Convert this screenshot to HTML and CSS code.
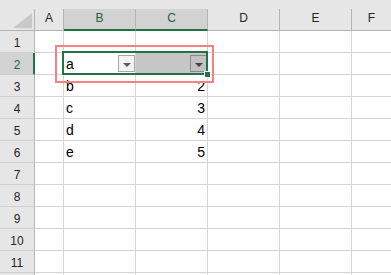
FILE: index.html
```html
<!DOCTYPE html>
<html>
<head>
<meta charset="utf-8">
<link rel="stylesheet" href="styles.css">
</head>
<body>
<div class="screen">
  <div class="topstrip"></div>
  <div class="sheet">
    <div class="hd corner"><svg width="19" height="15" viewBox="0 0 19 15"><polygon points="19,0 19,15 0,15" fill="#c9c9c9"/></svg></div>
    <div class="hd col">A</div>
    <div class="hd col sel">B</div>
    <div class="hd col sel">C</div>
    <div class="hd col">D</div>
    <div class="hd col">E</div>
    <div class="hd col last">F</div>

    <div class="hd row">1</div>
    <div class="c"></div><div class="c"></div><div class="c"></div><div class="c"></div><div class="c"></div><div class="c last"></div>

    <div class="hd row rsel">2</div>
    <div class="c"></div>
    <div class="c txt">a<span class="dd"><i></i></span></div>
    <div class="c grey"><span class="dd dark"><i></i></span></div>
    <div class="c"></div><div class="c"></div><div class="c last"></div>

    <div class="hd row">3</div>
    <div class="c"></div><div class="c txt">b</div><div class="c num">2</div><div class="c"></div><div class="c"></div><div class="c last"></div>

    <div class="hd row">4</div>
    <div class="c"></div><div class="c txt">c</div><div class="c num">3</div><div class="c"></div><div class="c"></div><div class="c last"></div>

    <div class="hd row">5</div>
    <div class="c"></div><div class="c txt">d</div><div class="c num">4</div><div class="c"></div><div class="c"></div><div class="c last"></div>

    <div class="hd row">6</div>
    <div class="c"></div><div class="c txt">e</div><div class="c num">5</div><div class="c"></div><div class="c"></div><div class="c last"></div>

    <div class="hd row">7</div>
    <div class="c"></div><div class="c"></div><div class="c"></div><div class="c"></div><div class="c"></div><div class="c last"></div>

    <div class="hd row">8</div>
    <div class="c"></div><div class="c"></div><div class="c"></div><div class="c"></div><div class="c"></div><div class="c last"></div>

    <div class="hd row">9</div>
    <div class="c"></div><div class="c"></div><div class="c"></div><div class="c"></div><div class="c"></div><div class="c last"></div>

    <div class="hd row">10</div>
    <div class="c"></div><div class="c"></div><div class="c"></div><div class="c"></div><div class="c"></div><div class="c last"></div>

    <div class="hd row">11</div>
    <div class="c"></div><div class="c"></div><div class="c"></div><div class="c"></div><div class="c"></div><div class="c last"></div>

    <div class="hd row"></div>
    <div class="c"></div><div class="c"></div><div class="c"></div><div class="c"></div><div class="c"></div><div class="c last"></div>
  </div>
  <div class="selbox"></div>
  <div class="handle"></div>
  <div class="redbox"></div>
</div>
</body>
</html>
```
FILE: styles.css
```css
html, body {
  margin: 0;
  padding: 0;
  background: #ffffff;
  overflow: hidden;
}
.screen {
  position: relative;
  width: 391px;
  height: 275px;
  overflow: hidden;
  font-family: "Liberation Sans", Arial, sans-serif;
}
.topstrip {
  height: 9px;
  background: #e6e6e6;
}
.sheet {
  display: grid;
  grid-template-columns: 35px 29px 72px 72px 72px 72px 1fr;
  grid-auto-rows: 22px;
}
.sheet > div {
  box-sizing: border-box;
  border-right: 1px solid #d4d4d4;
  border-bottom: 1px solid #d4d4d4;
}
.hd {
  background: #e6e6e6;
  color: #262626;
  font-size: 12px;
  display: flex;
  align-items: center;
  justify-content: center;
}
.sheet > .col {
  border-right: 1px solid #b4b4b4;
  border-bottom: 1px solid #b4b4b4;
  padding-bottom: 3px;
}
.sheet > .col.sel {
  background: #d2d2d2;
  color: #1f5f3c;
  border-bottom: 2px solid #217346;
  padding-bottom: 2px;
}
.sheet > .corner {
  border-right: 1px solid #b4b4b4;
  border-bottom: 1px solid #b4b4b4;
  justify-content: flex-end;
  align-items: flex-end;
  padding: 0 2px 2px 0;
}
.corner svg {
  display: block;
}
.sheet > .row {
  border-right: 1px solid #b4b4b4;
  border-bottom: 1px solid #d0d0d0;
  padding-top: 2px;
}
.sheet > .row.rsel {
  background: #d2d2d2;
  color: #1f5f3c;
  border-right: 2px solid #217346;
  padding-left: 1px;
}
.sheet > .last {
  border-right: none;
}
.c {
  display: flex;
  align-items: center;
  font-size: 14px;
  color: #000000;
  padding-top: 1px;
}
.txt {
  padding-left: 2px;
  justify-content: space-between;
}
.num {
  justify-content: flex-end;
  padding-right: 2px;
}
.grey {
  background: #c6c6c6;
  justify-content: flex-end;
}
.dd {
  box-sizing: border-box;
  width: 17px;
  height: 17px;
  border: 1px solid #a9a9a9;
  background: #f3f3f3;
  display: flex;
  align-items: center;
  justify-content: center;
  margin-top: -1px;
}
.dd.dark {
  background: #c2c2c2;
  border-color: #8a8a8a;
}
.dd i {
  width: 0;
  height: 0;
  border-left: 4px solid transparent;
  border-right: 4px solid transparent;
  border-top: 4px solid #5a5a5a;
  margin-top: 2px;
}
.dd.dark i {
  border-top-color: #444444;
}
.selbox {
  position: absolute;
  left: 62px;
  top: 51px;
  width: 146px;
  height: 24px;
  box-sizing: border-box;
  border: 2px solid #217346;
}
.handle {
  position: absolute;
  left: 204px;
  top: 71px;
  width: 7px;
  height: 7px;
  box-sizing: border-box;
  border: 1px solid #ffffff;
  background: #217346;
}
.redbox {
  position: absolute;
  left: 55px;
  top: 45px;
  width: 159px;
  height: 38px;
  box-sizing: border-box;
  border: 2px solid #f58282;
}
```
